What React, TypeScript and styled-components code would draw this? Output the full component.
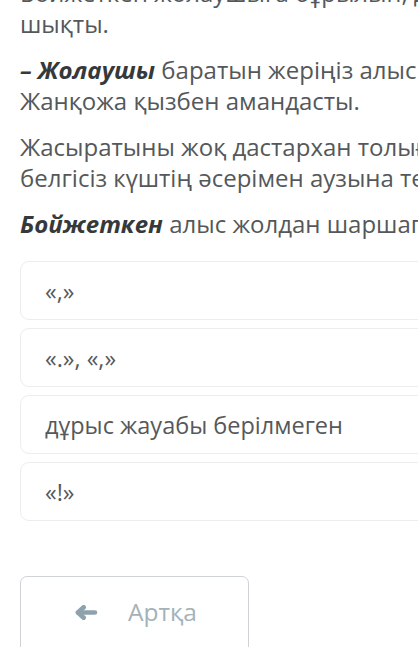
import styled, { createGlobalStyle } from "styled-components";

const GlobalStyle = createGlobalStyle`
    html, body {
        margin: 0;
        padding: 0;
        background: #ffffff;
        overflow: hidden;
    }
    body {
        font-family: "Open Sans", "Noto Sans", sans-serif;
    }
`;

const Page = styled.div`
    width: 620px;
    padding-left: 20px;
    margin-top: -23px;
    display: flex;
    flex-direction: column;
`;

const Passage = styled.div`
    display: flex;
    flex-direction: column;
    gap: 15px;
`;

const Paragraph = styled.p`
    margin: 0;
    font-size: 24px;
    line-height: 31px;
    color: #54585a;
    white-space: nowrap;
    b {
        color: #36393b;
        font-weight: 700;
        font-style: italic;
    }
`;

const Options = styled.div`
    margin-top: 22px;
    display: flex;
    flex-direction: column;
    gap: 8px;
`;

const Option = styled.div`
    height: 59px;
    box-sizing: border-box;
    border: 1px solid #ededed;
    border-radius: 9px;
    display: flex;
    align-items: center;
    padding-left: 24px;
    font-size: 23.5px;
    color: #55595b;
`;

const BackButton = styled.button`
    margin-top: 55px;
    width: 229px;
    height: 90px;
    box-sizing: border-box;
    border: 1px solid #cfd3d5;
    border-radius: 7px;
    background: #ffffff;
    display: flex;
    align-items: flex-start;
    justify-content: center;
    gap: 30px;
    padding: 18px 0 0 2px;
    font-family: "Open Sans", "Noto Sans", sans-serif;
    font-size: 24.5px;
    color: #a4b2b9;
`;

const ArrowIcon = styled.svg`
    margin-top: 10px;
    color: #8ea2ad;
    flex: none;
`;

const options = ["«,»", "«.», «,»", "дұрыс жауабы берілмеген", "«!»"];

export default function App() {
    return (
        <>
            <GlobalStyle />
            <Page>
                <Passage>
                    <Paragraph>
                        Бойжеткен жолаушыға бұрылып, дүр етіп орнынан ұшып тұра
                        <br />
                        шықты.
                    </Paragraph>
                    <Paragraph>
                        <b>– Жолаушы</b> баратын жеріңіз алыс. – деп
                        <br />
                        Жанқожа қызбен амандасты.
                    </Paragraph>
                    <Paragraph>
                        Жасыратыны жоқ дастархан толығымен
                        <br />
                        белгісіз күштің әсерімен аузына тез-тез
                    </Paragraph>
                    <Paragraph>
                        <b>Бойжеткен</b> алыс жолдан шаршап келген еді.
                    </Paragraph>
                </Passage>
                <Options>
                    {options.map((text) => (
                        <Option key={text}>{text}</Option>
                    ))}
                </Options>
                <BackButton>
                    <ArrowIcon width="24" height="15" viewBox="0 -1 24 16">
                        <g
                            fill="none"
                            stroke="currentColor"
                            strokeWidth="5"
                            strokeLinecap="round"
                            strokeLinejoin="round"
                        >
                            <path d="M3.5 7H21.5" />
                            <path d="M9.5 1.5L3.5 7L9.5 12.5" />
                        </g>
                    </ArrowIcon>
                    <span>Артқа</span>
                </BackButton>
            </Page>
        </>
    );
}
